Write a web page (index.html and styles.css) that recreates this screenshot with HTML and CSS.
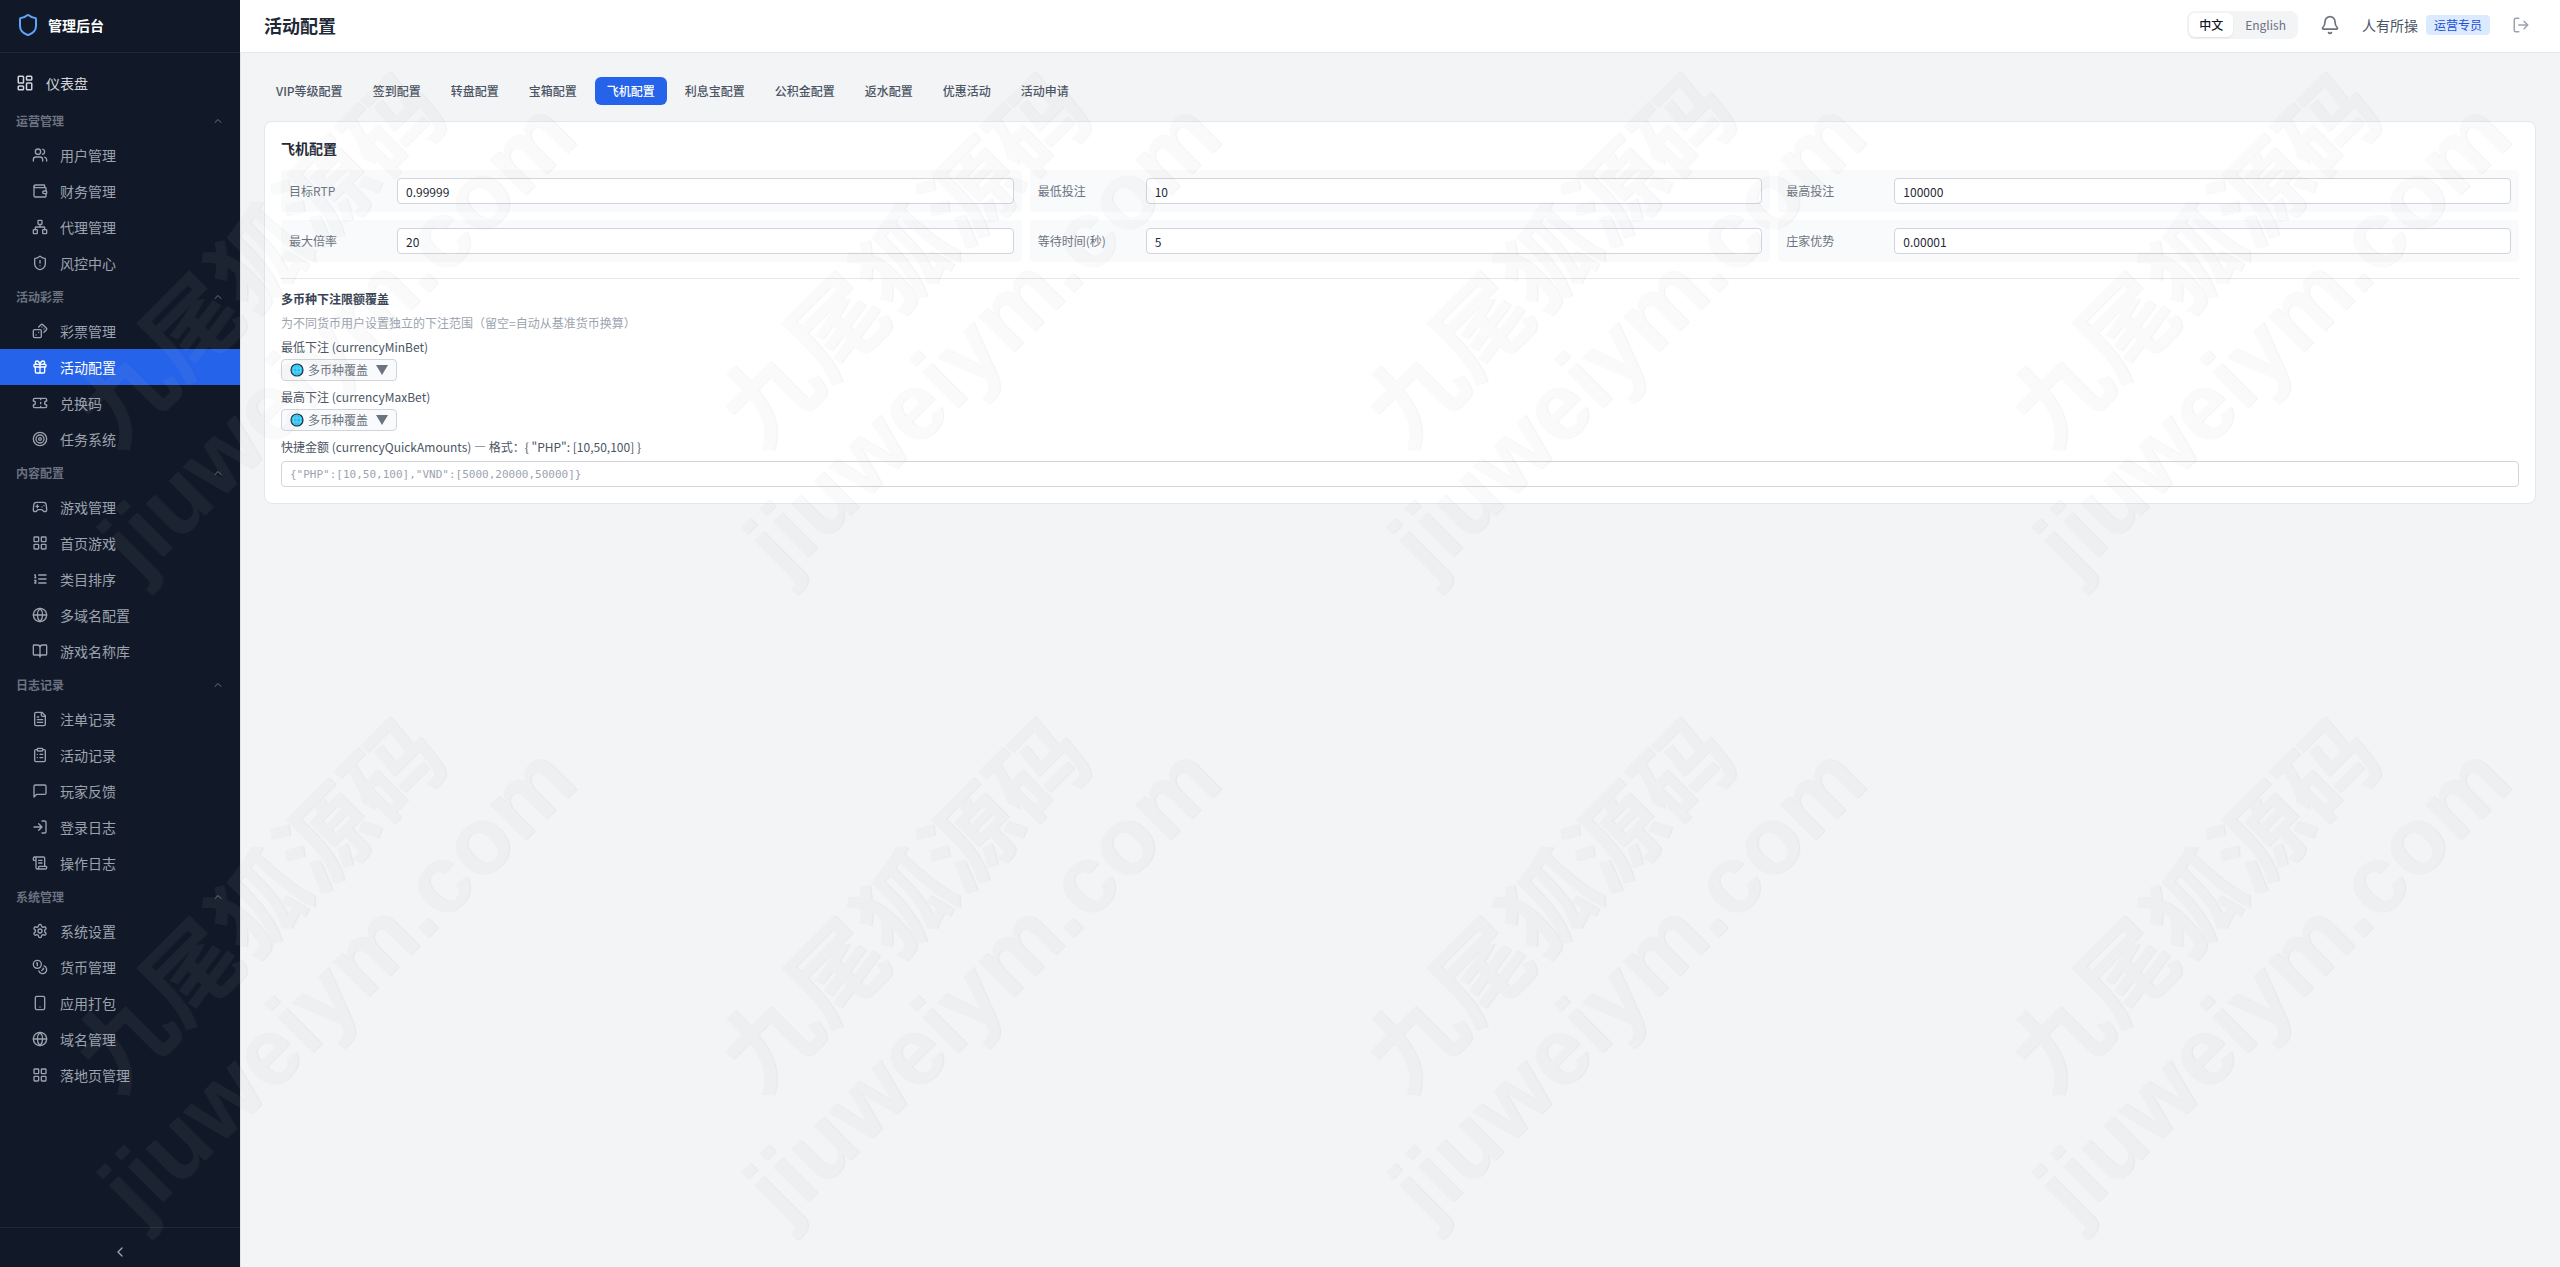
FILE: index.html
```html
<!DOCTYPE html>
<html lang="zh-CN">
<head>
  <meta charset="UTF-8">
  <meta name="viewport" content="width=device-width, initial-scale=1">
  <title>管理后台 - 活动配置</title>
  <link rel="stylesheet" href="styles.css">
</head>
<body>
  <!-- icon sprite -->
  <svg class="sprite" aria-hidden="true">
    <symbol id="i-shield" viewBox="0 0 24 24"><path d="M20 13c0 5-3.5 7.5-7.66 8.95a1 1 0 0 1-.67-.01C7.5 20.5 4 18 4 13V6a1 1 0 0 1 1-1c2 0 4.5-1.2 6.24-2.72a1.17 1.17 0 0 1 1.52 0C14.51 3.81 17 5 19 5a1 1 0 0 1 1 1z"/></symbol>
    <symbol id="i-dashboard" viewBox="0 0 24 24"><rect x="3" y="3" width="7" height="9" rx="1"/><rect x="14" y="3" width="7" height="5" rx="1"/><rect x="14" y="12" width="7" height="9" rx="1"/><rect x="3" y="16" width="7" height="5" rx="1"/></symbol>
    <symbol id="i-users" viewBox="0 0 24 24"><path d="M16 21v-2a4 4 0 0 0-4-4H6a4 4 0 0 0-4 4v2"/><circle cx="9" cy="7" r="4"/><path d="M22 21v-2a4 4 0 0 0-3-3.87M16 3.13a4 4 0 0 1 0 7.75"/></symbol>
    <symbol id="i-wallet" viewBox="0 0 24 24"><path d="M19 7V4a1 1 0 0 0-1-1H5a2 2 0 0 0 0 4h15a1 1 0 0 1 1 1v4h-3a2 2 0 0 0 0 4h3a1 1 0 0 0 1-1v-2a1 1 0 0 0-1-1"/><path d="M3 5v14a2 2 0 0 0 2 2h15a1 1 0 0 0 1-1v-4"/></symbol>
    <symbol id="i-network" viewBox="0 0 24 24"><rect x="16" y="16" width="6" height="6" rx="1"/><rect x="2" y="16" width="6" height="6" rx="1"/><rect x="9" y="2" width="6" height="6" rx="1"/><path d="M5 16v-3a1 1 0 0 1 1-1h12a1 1 0 0 1 1 1v3M12 12V8"/></symbol>
    <symbol id="i-shield-alert" viewBox="0 0 24 24"><path d="M20 13c0 5-3.5 7.5-7.66 8.95a1 1 0 0 1-.67-.01C7.5 20.5 4 18 4 13V6a1 1 0 0 1 1-1c2 0 4.5-1.2 6.24-2.72a1.17 1.17 0 0 1 1.52 0C14.51 3.81 17 5 19 5a1 1 0 0 1 1 1z"/><path d="M12 8v4M12 16h.01"/></symbol>
    <symbol id="i-dices" viewBox="0 0 24 24"><rect x="2" y="10" width="12" height="12" rx="2"/><path d="m17.92 14 3.5-3.5a2.24 2.24 0 0 0 0-3l-5-4.92a2.24 2.24 0 0 0-3 0L10 6M6 18h.01M10 14h.01M15 6h.01M18 9h.01"/></symbol>
    <symbol id="i-gift" viewBox="0 0 24 24"><rect x="3" y="8" width="18" height="4" rx="1"/><path d="M12 8v13M19 12v7a2 2 0 0 1-2 2H7a2 2 0 0 1-2-2v-7M7.5 8a2.5 2.5 0 0 1 0-5A4.8 8 0 0 1 12 8a4.8 8 0 0 1 4.5-5 2.5 2.5 0 0 1 0 5"/></symbol>
    <symbol id="i-ticket" viewBox="0 0 24 24"><path d="M2 9a3 3 0 0 1 0 6v2a2 2 0 0 0 2 2h16a2 2 0 0 0 2-2v-2a3 3 0 0 1 0-6V7a2 2 0 0 0-2-2H4a2 2 0 0 0-2 2ZM13 5v2M13 17v2M13 11v2"/></symbol>
    <symbol id="i-target" viewBox="0 0 24 24"><circle cx="12" cy="12" r="10"/><circle cx="12" cy="12" r="6"/><circle cx="12" cy="12" r="2"/></symbol>
    <symbol id="i-gamepad" viewBox="0 0 24 24"><path d="M6 11h4M8 9v4M15 12h.01M18 10h.01M17.32 5H6.68a4 4 0 0 0-3.978 3.59c-.006.052-.01.101-.017.152C2.604 9.416 2 14.456 2 16a3 3 0 0 0 3 3c1 0 1.5-.5 2-1l1.414-1.414A2 2 0 0 1 9.828 16h4.344a2 2 0 0 1 1.414.586L17 18c.5.5 1 1 2 1a3 3 0 0 0 3-3c0-1.545-.604-6.584-.685-7.258-.007-.05-.011-.1-.017-.151A4 4 0 0 0 17.32 5z"/></symbol>
    <symbol id="i-grid" viewBox="0 0 24 24"><rect x="3" y="3" width="7" height="7" rx="1"/><rect x="14" y="3" width="7" height="7" rx="1"/><rect x="14" y="14" width="7" height="7" rx="1"/><rect x="3" y="14" width="7" height="7" rx="1"/></symbol>
    <symbol id="i-list" viewBox="0 0 24 24"><path d="M10 12h11M10 18h11M10 6h11M4 10h2M4 6h1v4M6 18H4c0-1 2-2 2-3s-1-1.5-2-1"/></symbol>
    <symbol id="i-globe" viewBox="0 0 24 24"><circle cx="12" cy="12" r="10"/><path d="M12 2a14.5 14.5 0 0 0 0 20 14.5 14.5 0 0 0 0-20M2 12h20"/></symbol>
    <symbol id="i-book" viewBox="0 0 24 24"><path d="M12 7v14M3 18a1 1 0 0 1-1-1V4a1 1 0 0 1 1-1h5a4 4 0 0 1 4 4 4 4 0 0 1 4-4h5a1 1 0 0 1 1 1v13a1 1 0 0 1-1 1h-6a3 3 0 0 0-3 3 3 3 0 0 0-3-3z"/></symbol>
    <symbol id="i-file" viewBox="0 0 24 24"><path d="M15 2H6a2 2 0 0 0-2 2v16a2 2 0 0 0 2 2h12a2 2 0 0 0 2-2V7ZM14 2v4a2 2 0 0 0 2 2h4M10 9H8M16 13H8M16 17H8"/></symbol>
    <symbol id="i-clipboard" viewBox="0 0 24 24"><rect x="8" y="2" width="8" height="4" rx="1"/><path d="M16 4h2a2 2 0 0 1 2 2v14a2 2 0 0 1-2 2H6a2 2 0 0 1-2-2V6a2 2 0 0 1 2-2h2M12 11h4M12 16h4M8 11h.01M8 16h.01"/></symbol>
    <symbol id="i-message" viewBox="0 0 24 24"><path d="M21 15a2 2 0 0 1-2 2H7l-4 4V5a2 2 0 0 1 2-2h14a2 2 0 0 1 2 2z"/></symbol>
    <symbol id="i-login" viewBox="0 0 24 24"><path d="M15 3h4a2 2 0 0 1 2 2v14a2 2 0 0 1-2 2h-4M10 17l5-5-5-5M15 12H3"/></symbol>
    <symbol id="i-scroll" viewBox="0 0 24 24"><path d="M15 12h-5M15 8h-5M19 17V5a2 2 0 0 0-2-2H4M8 21h12a2 2 0 0 0 2-2v-1a1 1 0 0 0-1-1H11a1 1 0 0 0-1 1v1a2 2 0 1 1-4 0V5a2 2 0 1 0-4 0v2a1 1 0 0 0 1 1h3"/></symbol>
    <symbol id="i-settings" viewBox="0 0 24 24"><path d="M12.22 2h-.44a2 2 0 0 0-2 2v.18a2 2 0 0 1-1 1.73l-.43.25a2 2 0 0 1-2 0l-.15-.08a2 2 0 0 0-2.73.73l-.22.38a2 2 0 0 0 .73 2.73l.15.1a2 2 0 0 1 1 1.72v.51a2 2 0 0 1-1 1.74l-.15.09a2 2 0 0 0-.73 2.73l.22.38a2 2 0 0 0 2.73.73l.15-.08a2 2 0 0 1 2 0l.43.25a2 2 0 0 1 1 1.73V20a2 2 0 0 0 2 2h.44a2 2 0 0 0 2-2v-.18a2 2 0 0 1 1-1.73l.43-.25a2 2 0 0 1 2 0l.15.08a2 2 0 0 0 2.73-.73l.22-.39a2 2 0 0 0-.73-2.73l-.15-.08a2 2 0 0 1-1-1.74v-.5a2 2 0 0 1 1-1.74l.15-.09a2 2 0 0 0 .73-2.73l-.22-.38a2 2 0 0 0-2.73-.73l-.15.08a2 2 0 0 1-2 0l-.43-.25a2 2 0 0 1-1-1.73V4a2 2 0 0 0-2-2z"/><circle cx="12" cy="12" r="3"/></symbol>
    <symbol id="i-coins" viewBox="0 0 24 24"><circle cx="8" cy="8" r="6"/><path d="M18.09 10.37A6 6 0 1 1 10.34 18M7 6h1v4M16.71 13.88l.7.71-2.82 2.82"/></symbol>
    <symbol id="i-phone" viewBox="0 0 24 24"><rect x="5" y="2" width="14" height="20" rx="2"/><path d="M12 18h.01"/></symbol>
    <symbol id="i-bell" viewBox="0 0 24 24"><path d="M10.268 21a2 2 0 0 0 3.464 0M3.262 15.326A1 1 0 0 0 4 17h16a1 1 0 0 0 .74-1.673C19.41 13.956 18 12.499 18 8A6 6 0 0 0 6 8c0 4.499-1.411 5.956-2.738 7.326"/></symbol>
    <symbol id="i-logout" viewBox="0 0 24 24"><path d="M9 21H5a2 2 0 0 1-2-2V5a2 2 0 0 1 2-2h4M16 17l5-5-5-5M21 12H9"/></symbol>
    <symbol id="i-up" viewBox="0 0 24 24"><path d="m18 15-6-6-6 6"/></symbol>
    <symbol id="i-left" viewBox="0 0 24 24"><path d="m15 18-6-6 6-6"/></symbol>
    <symbol id="i-world" viewBox="0 0 14 14">
      <circle cx="7" cy="7" r="6" fill="#1fc0f5" stroke="#17333f" stroke-width="1.2"/>
      <path d="M2 5h10M2 9h10M7 2v10M5 2c-2 3-2 7 0 10M9 2c2 3 2 7 0 10" fill="none" stroke="#8be3fb" stroke-width=".6"/>
    </symbol>
    <symbol id="i-triangle" viewBox="0 0 12 12"><path d="M0 1h12L6 11z" fill="#6b7280" stroke="none"/></symbol>
  </svg>

  <div class="app">
    <aside class="sidebar">
      <div class="brand"><svg class="icon"><use href="#i-shield"/></svg><span>管理后台</span></div>
      <nav class="nav">
        <a class="nav-home" href="#"><svg class="icon"><use href="#i-dashboard"/></svg>仪表盘</a>

        <button class="nav-group" type="button">运营管理<svg class="icon"><use href="#i-up"/></svg></button>
        <a class="nav-item" href="#"><svg class="icon"><use href="#i-users"/></svg>用户管理</a>
        <a class="nav-item" href="#"><svg class="icon"><use href="#i-wallet"/></svg>财务管理</a>
        <a class="nav-item" href="#"><svg class="icon"><use href="#i-network"/></svg>代理管理</a>
        <a class="nav-item" href="#"><svg class="icon"><use href="#i-shield-alert"/></svg>风控中心</a>

        <button class="nav-group" type="button">活动彩票<svg class="icon"><use href="#i-up"/></svg></button>
        <a class="nav-item" href="#"><svg class="icon"><use href="#i-dices"/></svg>彩票管理</a>
        <a class="nav-item active" href="#"><svg class="icon"><use href="#i-gift"/></svg>活动配置</a>
        <a class="nav-item" href="#"><svg class="icon"><use href="#i-ticket"/></svg>兑换码</a>
        <a class="nav-item" href="#"><svg class="icon"><use href="#i-target"/></svg>任务系统</a>

        <button class="nav-group" type="button">内容配置<svg class="icon"><use href="#i-up"/></svg></button>
        <a class="nav-item" href="#"><svg class="icon"><use href="#i-gamepad"/></svg>游戏管理</a>
        <a class="nav-item" href="#"><svg class="icon"><use href="#i-grid"/></svg>首页游戏</a>
        <a class="nav-item" href="#"><svg class="icon"><use href="#i-list"/></svg>类目排序</a>
        <a class="nav-item" href="#"><svg class="icon"><use href="#i-globe"/></svg>多域名配置</a>
        <a class="nav-item" href="#"><svg class="icon"><use href="#i-book"/></svg>游戏名称库</a>

        <button class="nav-group" type="button">日志记录<svg class="icon"><use href="#i-up"/></svg></button>
        <a class="nav-item" href="#"><svg class="icon"><use href="#i-file"/></svg>注单记录</a>
        <a class="nav-item" href="#"><svg class="icon"><use href="#i-clipboard"/></svg>活动记录</a>
        <a class="nav-item" href="#"><svg class="icon"><use href="#i-message"/></svg>玩家反馈</a>
        <a class="nav-item" href="#"><svg class="icon"><use href="#i-login"/></svg>登录日志</a>
        <a class="nav-item" href="#"><svg class="icon"><use href="#i-scroll"/></svg>操作日志</a>

        <button class="nav-group" type="button">系统管理<svg class="icon"><use href="#i-up"/></svg></button>
        <a class="nav-item" href="#"><svg class="icon"><use href="#i-settings"/></svg>系统设置</a>
        <a class="nav-item" href="#"><svg class="icon"><use href="#i-coins"/></svg>货币管理</a>
        <a class="nav-item" href="#"><svg class="icon"><use href="#i-phone"/></svg>应用打包</a>
        <a class="nav-item" href="#"><svg class="icon"><use href="#i-globe"/></svg>域名管理</a>
        <a class="nav-item" href="#"><svg class="icon"><use href="#i-grid"/></svg>落地页管理</a>
      </nav>
      <button class="collapse" type="button" aria-label="收起菜单"><svg class="icon"><use href="#i-left"/></svg></button>
    </aside>

    <div class="page">
      <header class="topbar">
        <h1>活动配置</h1>
        <div class="topbar-right">
          <div class="lang">
            <button class="active" type="button">中文</button>
            <button type="button">English</button>
          </div>
          <button class="icon-btn bell" type="button" aria-label="通知"><svg class="icon"><use href="#i-bell"/></svg></button>
          <div class="user"><span>人有所操</span><span class="badge">运营专员</span></div>
          <button class="icon-btn logout" type="button" aria-label="退出"><svg class="icon"><use href="#i-logout"/></svg></button>
        </div>
      </header>

      <main class="content">
        <div class="tabs">
          <button type="button">VIP等级配置</button>
          <button type="button">签到配置</button>
          <button type="button">转盘配置</button>
          <button type="button">宝箱配置</button>
          <button class="active" type="button">飞机配置</button>
          <button type="button">利息宝配置</button>
          <button type="button">公积金配置</button>
          <button type="button">返水配置</button>
          <button type="button">优惠活动</button>
          <button type="button">活动申请</button>
        </div>

        <section class="card">
          <h2>飞机配置</h2>
          <div class="fields">
            <div class="field"><label for="rtp">目标RTP</label><input id="rtp" type="text" value="0.99999"></div>
            <div class="field"><label for="minBet">最低投注</label><input id="minBet" type="text" value="10"></div>
            <div class="field"><label for="maxBet">最高投注</label><input id="maxBet" type="text" value="100000"></div>
            <div class="field"><label for="maxRate">最大倍率</label><input id="maxRate" type="text" value="20"></div>
            <div class="field"><label for="wait">等待时间(秒)</label><input id="wait" type="text" value="5"></div>
            <div class="field"><label for="edge">庄家优势</label><input id="edge" type="text" value="0.00001"></div>
          </div>

          <div class="currency">
            <h3>多币种下注限额覆盖</h3>
            <p class="hint">为不同货币用户设置独立的下注范围（留空=自动从基准货币换算）</p>
            <div class="override">
              <span id="minLabel">最低下注 (currencyMinBet)</span>
              <button type="button" aria-describedby="minLabel"><svg class="world"><use href="#i-world"/></svg><span>多币种覆盖</span><svg class="triangle"><use href="#i-triangle"/></svg></button>
            </div>
            <div class="override">
              <span id="maxLabel">最高下注 (currencyMaxBet)</span>
              <button type="button" aria-describedby="maxLabel"><svg class="world"><use href="#i-world"/></svg><span>多币种覆盖</span><svg class="triangle"><use href="#i-triangle"/></svg></button>
            </div>
            <div class="quick">
              <label for="quick">快捷金额 (currencyQuickAmounts) — 格式：{ "PHP": [10,50,100] }</label>
              <input id="quick" type="text" placeholder='{"PHP":[10,50,100],"VND":[5000,20000,50000]}'>
            </div>
          </div>
        </section>
      </main>
    </div>
  </div>

  <div class="watermark" aria-hidden="true">
    <div class="watermark-grid">
      <div class="mark"><p>九尾狐源码<br>jiuweiym.com</p></div>
      <div class="mark"><p>九尾狐源码<br>jiuweiym.com</p></div>
      <div class="mark"><p>九尾狐源码<br>jiuweiym.com</p></div>
      <div class="mark"><p>九尾狐源码<br>jiuweiym.com</p></div>
      <div class="mark"><p>九尾狐源码<br>jiuweiym.com</p></div>
      <div class="mark"><p>九尾狐源码<br>jiuweiym.com</p></div>
      <div class="mark"><p>九尾狐源码<br>jiuweiym.com</p></div>
      <div class="mark"><p>九尾狐源码<br>jiuweiym.com</p></div>
    </div>
  </div>
</body>
</html>
```
FILE: styles.css
```css
* {
  box-sizing: border-box;
  margin: 0;
  padding: 0;
}
body {
  font-family: "Noto Sans CJK SC", "Noto Sans", sans-serif;
  font-size: 14px;
  line-height: 20px;
  color: #1f2937;
  background: #f3f4f6;
}
button, input {
  font: inherit;
  color: inherit;
}
button {
  border: none;
  background: none;
  cursor: pointer;
}
a {
  color: inherit;
  text-decoration: none;
}
.sprite {
  position: absolute;
  width: 0;
  height: 0;
}
.icon {
  width: 16px;
  height: 16px;
  flex-shrink: 0;
  fill: none;
  stroke: currentColor;
  stroke-width: 2;
  stroke-linecap: round;
  stroke-linejoin: round;
}
.app {
  display: flex;
  min-height: 100vh;
}

/* sidebar */
.sidebar {
  width: 240px;
  flex-shrink: 0;
  display: flex;
  flex-direction: column;
  background: #111827;
  color: #9ca3af;
  box-shadow: 1px 0 0 #e2e4e8;
}
.brand {
  display: flex;
  align-items: center;
  gap: 8px;
  padding: 13px 16px 15px;
  border-bottom: 1px solid #1f2937;
  color: #fff;
  font-weight: 700;
}
.brand .icon {
  width: 24px;
  height: 24px;
  color: #60a5fa;
}
.nav {
  flex: 1;
  padding: 8px 0;
}
.nav-home {
  display: flex;
  align-items: center;
  gap: 12px;
  padding: 12px 16px;
  color: #d1d5db;
}
.nav-home .icon {
  width: 18px;
  height: 18px;
}
.nav-group {
  display: flex;
  align-items: center;
  justify-content: space-between;
  width: 100%;
  padding: 8px 16px;
  font-size: 12px;
  line-height: 16px;
  font-weight: 600;
  color: #6b7280;
}
.nav-group .icon {
  width: 12px;
  height: 12px;
}
.nav-item {
  display: flex;
  align-items: center;
  gap: 12px;
  padding: 8px 16px 8px 32px;
}
.nav-item.active {
  background: #2563eb;
  color: #fff;
}
.collapse {
  display: flex;
  justify-content: center;
  padding: 16px 0 7px;
  border-top: 1px solid #1f2937;
  color: #9ca3af;
}

/* top bar */
.page {
  flex: 1;
  min-width: 0;
}
.topbar {
  display: flex;
  align-items: center;
  justify-content: space-between;
  padding: 9px 24px 11px;
  background: #fff;
  border-bottom: 1px solid #e5e7eb;
}
.topbar h1 {
  font-size: 18px;
  line-height: 28px;
  font-weight: 600;
}
.topbar-right {
  display: flex;
  align-items: center;
  gap: 16px;
}
.lang {
  display: flex;
  gap: 2px;
  padding: 2px;
  border-radius: 8px;
  background: #f3f4f6;
}
.lang button {
  padding: 4px 10px;
  border-radius: 6px;
  font-size: 12px;
  line-height: 16px;
  color: #6b7280;
}
.lang button.active {
  background: #fff;
  color: #111827;
  font-weight: 500;
  box-shadow: 0 1px 2px rgba(0, 0, 0, 0.08);
}
.icon-btn {
  display: flex;
  padding: 6px;
}
.bell {
  color: #6b7280;
}
.bell .icon {
  width: 20px;
  height: 20px;
}
.logout {
  color: #9ca3af;
}
.logout .icon {
  width: 18px;
  height: 18px;
}
.user {
  display: flex;
  align-items: center;
  gap: 8px;
  color: #4b5563;
}
.badge {
  padding: 2px 8px;
  border-radius: 4px;
  background: #dbeafe;
  color: #1d4ed8;
  font-size: 12px;
  line-height: 16px;
}

/* content */
.content {
  padding: 24px;
}
.tabs {
  display: flex;
  gap: 6px;
  margin-bottom: 16px;
}
.tabs button {
  padding: 6px 12px;
  border-radius: 6px;
  font-size: 12px;
  line-height: 16px;
  font-weight: 500;
  color: #4b5563;
}
.tabs button.active {
  background: #2563eb;
  color: #fff;
}
.card {
  padding: 16px;
  border: 1px solid #e5e7eb;
  border-radius: 8px;
  background: #fff;
  font-size: 12px;
  line-height: 16px;
}
.card h2 {
  margin-bottom: 12px;
  font-size: 14px;
  line-height: 20px;
  font-weight: 600;
}
.card input {
  height: 26px;
  padding: 0 8px;
  border: 1px solid #d1d5db;
  border-radius: 4px;
  background: #fff;
}
.fields {
  display: grid;
  grid-template-columns: repeat(3, 1fr);
  gap: 8px;
}
.field {
  display: flex;
  align-items: center;
  gap: 8px;
  padding: 8px;
  border-radius: 4px;
  background: #f9fafb;
}
.field label {
  width: 100px;
  flex-shrink: 0;
  color: #6b7280;
}
.field input {
  flex: 1;
  min-width: 0;
}
.currency {
  display: flex;
  flex-direction: column;
  gap: 8px;
  margin-top: 16px;
  padding-top: 12px;
  border-top: 1px solid #e5e7eb;
  color: #4b5563;
}
.currency h3 {
  font-size: 12px;
  font-weight: 600;
  color: #374151;
}
.hint {
  color: #9ca3af;
}
.override {
  display: flex;
  flex-direction: column;
  align-items: flex-start;
  gap: 4px;
}
.override button {
  display: flex;
  align-items: center;
  padding: 2px 8px;
  border: 1px solid #d1d5db;
  border-radius: 4px;
  background: #f9fafb;
  color: #6b7280;
}
.world {
  width: 14px;
  height: 14px;
  margin-right: 4px;
}
.triangle {
  width: 12px;
  height: 12px;
  margin-left: 8px;
}
.quick {
  display: flex;
  flex-direction: column;
  gap: 6px;
}
.quick input {
  font-family: "DejaVu Sans Mono", monospace;
  font-size: 11px;
}
.quick input::placeholder {
  color: #9ca3af;
  opacity: 1;
}

/* watermark laid over the whole window */
.watermark {
  position: fixed;
  inset: 0;
  overflow: hidden;
  pointer-events: none;
  opacity: 0.07;
}
.watermark-grid {
  display: grid;
  grid-template-columns: repeat(4, 645px);
  grid-auto-rows: 645px;
  margin: -24px;
}
.mark {
  display: flex;
  align-items: center;
  justify-content: center;
  font-family: "Liberation Sans", "Noto Sans CJK SC", sans-serif;
  font-size: 95px;
  line-height: 108px;
  font-weight: 700;
  text-align: center;
  white-space: nowrap;
  color: #b8b8b8;
  text-shadow: 1px 1px 1px #606060;
}
.mark p {
  transform: rotate(-45deg);
}
```
